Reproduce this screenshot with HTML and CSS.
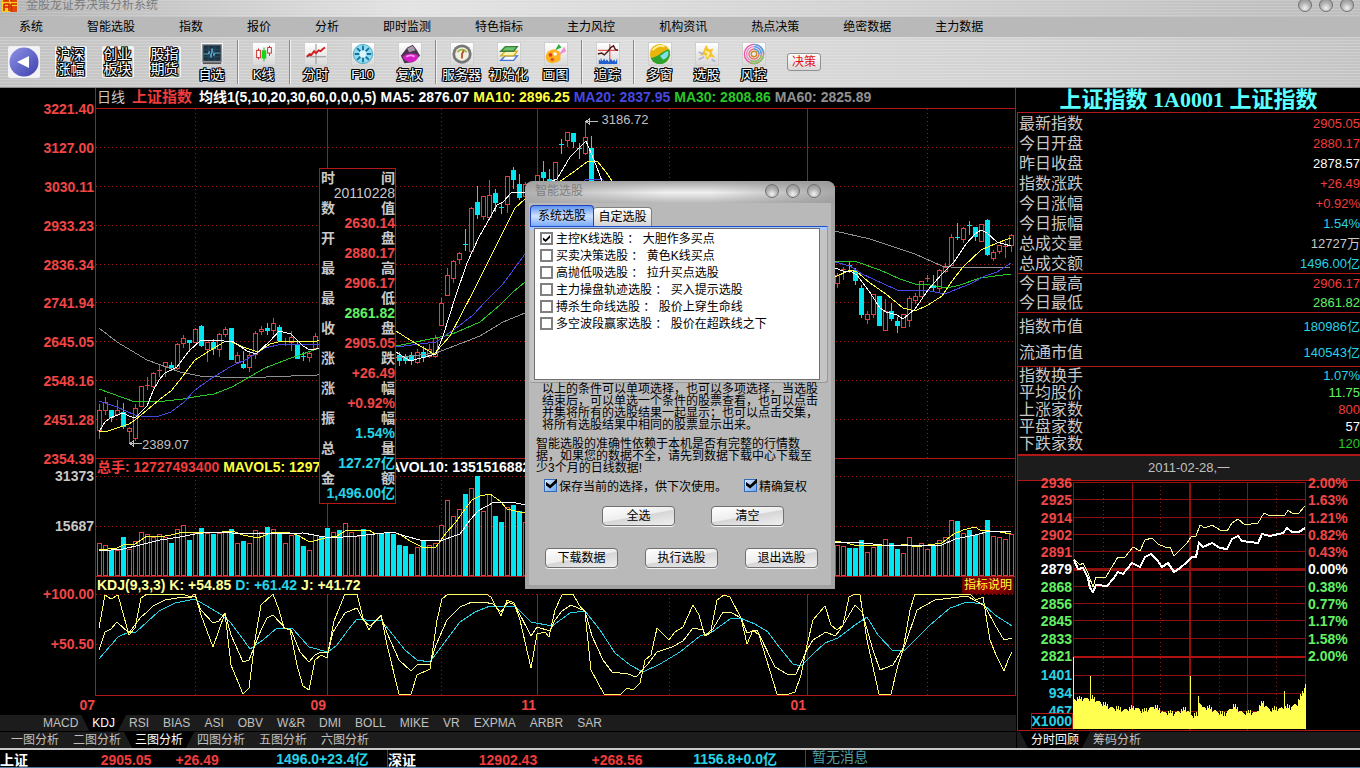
FILE: index.html
```html
<!DOCTYPE html>
<html lang="zh-CN">
<head>
    <meta charset="UTF-8">
    <meta name="viewport" content="width=device-width, initial-scale=1.0">
    <title>金股龙证券决策分析系统</title>
    <link rel="stylesheet" href="styles.css">
</head>
<body>
    <header class="titlebar">
        <svg class="app-logo" width="16" height="16" viewBox="0 0 16 16">
            <rect width="16" height="16" fill="#f6d21c"/>
            <path d="M1 2h6M1 5h6M2 8h5v7M2 8v7M2 11h5M4 0v5M9 2h6M9 2v3h6M9 8h6M9 8v7h6M9 11h6M9 13h6" stroke="#d81e06" stroke-width="1.6" fill="none"/>
        </svg>
        <span class="app-title">金股龙证券决策分析系统</span>
        <span class="win-buttons">
            <button class="orb" aria-label="最小化"></button>
            <button class="orb" aria-label="最大化"></button>
            <button class="orb" aria-label="关闭"></button>
        </span>
    </header>

    <nav class="menu">
        <a href="#">系统</a>
        <a href="#">智能选股</a>
        <a href="#">指数</a>
        <a href="#">报价</a>
        <a href="#">分析</a>
        <a href="#">即时监测</a>
        <a href="#">特色指标</a>
        <a href="#">主力风控</a>
        <a href="#">机构资讯</a>
        <a href="#">热点决策</a>
        <a href="#">绝密数据</a>
        <a href="#">主力数据</a>
    </nav>

    <div class="toolbar">
        <button class="tool" aria-label="返回">
            <svg width="32" height="32" viewBox="0 0 32 32">
                <defs>
                    <linearGradient id="back" x1="0" y1="0" x2="1" y2="1">
                        <stop offset="0" stop-color="#8f93e6"/>
                        <stop offset="1" stop-color="#3c40ae"/>
                    </linearGradient>
                </defs>
                <rect width="32" height="32" rx="2" fill="#f1f1f6"/>
                <circle cx="16" cy="16" r="14.5" fill="url(#back)"/>
                <path d="M9 16 21 10v12z" fill="#fff"/>
            </svg>
        </button>
        <button class="tool"><span class="tile">沪深<br>涨幅</span></button>
        <button class="tool"><span class="tile">创业<br>板块</span></button>
        <button class="tool"><span class="tile tile-green">股指<br>期货</span></button>
        <button class="tool">
            <svg class="icon" viewBox="0 0 24 24">
                <rect x="1" y="1" width="22" height="20" fill="#8f979c"/>
                <rect x="2.500" y="2.500" width="19" height="17" fill="#1d3344"/>
                <path d="M3 7h18M3 15h18M8 3v16M15 3v16" stroke="#2b4a60"/>
                <path d="M3 12h5l1-3 2 7 1-10 2 8 1-3h6" stroke="#5ab6dc" fill="none"/>
                <path d="M2 22h20" stroke="#555" stroke-width="2"/>
            </svg>
            <span class="caption">自选</span>
        </button>
        <i class="split"></i>
        <button class="tool">
            <svg class="icon" viewBox="0 0 24 24">
                <path d="M6 6v12M18 3v11" stroke="#c92020"/>
                <path d="M12 5v15" stroke="#15a815"/>
                <rect x="4" y="8" width="4" height="8" fill="#fff" stroke="#c92020"/>
                <rect x="9.500" y="8" width="5" height="9" fill="#19d319"/>
                <rect x="16" y="5" width="4" height="6" fill="#fff" stroke="#c92020"/>
            </svg>
            <span class="caption">K线</span>
        </button>
        <i class="split"></i>
        <button class="tool">
            <svg class="icon" viewBox="0 0 24 24">
                <path d="M12 1v22M1 15h22" stroke="#8b8b8b"/>
                <path d="M2 15l3-3 2 1 3-4 2 2 3-3 2 1 3-3 2-1" stroke="#d51c1c" stroke-width="2" fill="none"/>
            </svg>
            <span class="caption">分时</span>
        </button>
        <button class="tool">
            <svg class="icon" viewBox="0 0 24 24">
                <circle cx="12" cy="12" r="10.500" fill="#8edcf0" stroke="#4aa6c2"/>
                <path d="M12 3v18M3 12h18M5.500 5.500l13 13M18.500 5.500l-13 13" stroke="#186f9c" stroke-width="2"/>
                <circle cx="12" cy="12" r="4" fill="#d6f7ff"/>
            </svg>
            <span class="caption">F10</span>
        </button>
        <button class="tool">
            <svg class="icon" viewBox="0 0 24 24">
                <path d="M2 14 9 5l6-3 4 5 4 7-8 7-9 1z" fill="#4a3450"/>
                <path d="M9 6l6-3 3 5-7 2z" fill="#a99aa9"/>
                <path d="M4 15c3-4 14-5 17-1 0 5-5 7-8 7s-8-2-9-6z" fill="#d41ec3"/>
                <path d="M8 15c3-2 7-2 9 0" stroke="#ff9cf5" stroke-width="2" fill="none"/>
            </svg>
            <span class="caption">复权</span>
        </button>
        <i class="split"></i>
        <button class="tool">
            <svg class="icon" viewBox="0 0 24 24">
                <circle cx="12" cy="12" r="10.500" fill="#777"/>
                <circle cx="12" cy="12" r="7.500" fill="#f2efe0"/>
                <path d="M7 10a6 6 0 0 1 10 0" stroke="#9ab83c" stroke-width="2" fill="none"/>
                <path d="M12 17v-5l2-4" stroke="#b2542a" stroke-width="2" fill="none"/>
            </svg>
            <span class="caption">服务器</span>
        </button>
        <button class="tool">
            <svg class="icon" viewBox="0 0 24 24">
                <path d="M8 14h13l-4 5H3z" fill="#fff" stroke="#3a72d8" stroke-width="1.500"/>
                <path d="M8 9h13l-4 5H3z" fill="#fff3b0" stroke="#d6b018" stroke-width="1.500"/>
                <path d="M8 4h13l-4 5H3z" fill="#6bc46b" stroke="#3c7c3c" stroke-width="1.500"/>
            </svg>
            <span class="caption">初始化</span>
        </button>
        <button class="tool">
            <svg class="icon" viewBox="0 0 24 24">
                <path d="M1 14C2 8 10 5 15 9c4 3 1 6 2 8s-5 5-9 5-8-3-7-8z" fill="#ffb21e"/>
                <circle cx="6" cy="13" r="2" fill="#e43a1c"/>
                <circle cx="8" cy="18" r="2" fill="#e0502a"/>
                <circle cx="11" cy="12" r="2" fill="#fff"/>
                <path d="M11 8l4-7 3 4z" fill="#2eae3d"/>
                <path d="M15 13l6-9 2 5z" fill="#f08cc8"/>
            </svg>
            <span class="caption">画图</span>
        </button>
        <i class="split"></i>
        <button class="tool">
            <svg class="icon" viewBox="0 0 24 24">
                <path d="M1 8h22M14 1v20" stroke="#e02020"/>
                <path d="M1 12l4-1 3 2 4-4 3-4 3-2 2 4 3 1" stroke="#4b1515" stroke-width="1.500" fill="none"/>
                <path d="M2 23v-5l2 2v-4l2 4 2-3 1 3 2-2 2 3 2-4 2 3 2-2 1 3 2-4v6z" fill="#1f5fd0"/>
            </svg>
            <span class="caption">追踪</span>
        </button>
        <i class="split"></i>
        <button class="tool">
            <svg class="icon" viewBox="0 0 24 24">
                <circle cx="12" cy="12" r="11" fill="#e9b50a"/>
                <path d="M2 16C10 16 14 8 22 7c3 7-2 16-10 16-5 0-9-3-10-7z" fill="#2da22d"/>
                <path d="M12 14c3-1 5-5 9-5 1 5-2 9-6 9z" fill="#7fe0e8"/>
                <path d="M4 8c3-5 9-6 13-4" stroke="#fff2a0" stroke-width="2" fill="none"/>
            </svg>
            <span class="caption">多窗</span>
        </button>
        <button class="tool">
            <svg class="icon" viewBox="0 0 24 24">
                <path d="M11 2l3 5 5-1-2 5 4 5-6-1-3 4-2-6-6 1 4-5z" fill="#f4c52c"/>
                <path d="M3 18l6-3M17 18l4 2M3 10l5 2" stroke="#b0b0d8" stroke-width="2"/>
                <path d="M10 9l4 2-2 4" stroke="#fff2b0" stroke-width="2" fill="none"/>
            </svg>
            <span class="caption">选股</span>
        </button>
        <button class="tool">
            <svg class="icon" viewBox="0 0 24 24" fill="none">
                <circle cx="12" cy="12" r="10.500" stroke="#f0559f" stroke-width="1.500"/>
                <circle cx="12" cy="12" r="8" stroke="#e08ad8" stroke-width="1.500"/>
                <circle cx="12" cy="12" r="5.500" stroke="#ef6f6f" stroke-width="1.500"/>
                <circle cx="12" cy="12" r="3" stroke="#cc8a20" stroke-width="1.500"/>
                <path d="M12 1.500A10.500 10.500 0 0 1 22.500 12M12 4a8 8 0 0 1 8 8M12 6.500a5.500 5.500 0 0 1 5.500 5.500" stroke="#4aa6e8" stroke-width="1.500"/>
                <path d="M22.500 12A10.500 10.500 0 0 1 7 21M20 12a8 8 0 0 1-12 7" stroke="#7fc95a" stroke-width="1.500"/>
            </svg>
            <span class="caption">风控</span>
        </button>
        <button class="decide">决策</button>
    </div>

    <main class="workspace">
        <section class="charts">
            <div class="panel">
                <div class="axis axis-price">
                    <span>3221.40</span><span>3127.00</span><span>3030.11</span><span>2933.23</span><span>2836.34</span>
                    <span>2741.94</span><span>2645.05</span><span>2548.16</span><span>2451.28</span><span>2354.39</span>
                </div>
                <div class="plot">
                    <div class="legend legend-main">
                        <span class="silver">日线</span>
                        <span class="red wide">上证指数</span>
                        <span class="ma">
                            <span>均线1(5,10,20,30,60,0,0,0,5)</span>
                            <span>MA5: 2876.07</span>
                            <span class="yellow">MA10: 2896.25</span>
                            <span class="blue">MA20: 2837.95</span>
                            <span class="green">MA30: 2808.86</span>
                            <span class="gray">MA60: 2825.89</span>
                        </span>
                    </div>
                    <div class="canvas">
                        <svg id="price" class="price-svg" viewBox="96 109 919 349" preserveAspectRatio="none"></svg>
                        <span class="mark mark-high">3186.72</span>
                        <span class="mark mark-low">2389.07</span>
                    </div>
                </div>
            </div>
            <div class="panel">
                <div class="axis axis-sub silver">
                    <span>31373</span><span>15687</span>
                </div>
                <div class="plot">
                    <div class="legend">
                        <span class="red">总手: 12727493400</span>
                        <span class="yellow">MAVOL5: 12975320256</span>
                        <span>MAVOL10: 13515168829</span>
                    </div>
                    <svg id="volume" class="volume-svg" viewBox="96 476 919 100" preserveAspectRatio="none"></svg>
                </div>
            </div>
            <div class="panel">
                <div class="axis axis-sub">
                    <span>+100.00</span><span>+50.50</span>
                </div>
                <div class="plot">
                    <div class="legend">
                        <span class="pale">KDJ(9,3,3) K: +54.85</span>
                        <span class="cyan">D: +61.42</span>
                        <span class="pale">J: +41.72</span>
                        <a class="explain" href="#">指标说明</a>
                    </div>
                    <svg id="kdj" class="kdj-svg" viewBox="96 594 919 101" preserveAspectRatio="none"></svg>
                </div>
            </div>
            <div class="months">
                <span>07</span><span>09</span><span>11</span><span>01</span>
            </div>
            <div class="tabs tabs-indicator">
                <button>MACD</button>
                <button class="on">KDJ</button>
                <button>RSI</button>
                <button>BIAS</button>
                <button>ASI</button>
                <button>OBV</button>
                <button>W&amp;R</button>
                <button>DMI</button>
                <button>BOLL</button>
                <button>MIKE</button>
                <button>VR</button>
                <button>EXPMA</button>
                <button>ARBR</button>
                <button>SAR</button>
            </div>
            <div class="tabs tabs-view">
                <button>一图分析</button>
                <button>二图分析</button>
                <button class="on">三图分析</button>
                <button>四图分析</button>
                <button>五图分析</button>
                <button>六图分析</button>
            </div>
        </section>

        <aside class="quote">
            <h2>上证指数 1A0001 上证指数</h2>
            <div class="quote-box">
                <table class="rows">
                    <tr><th>最新指数</th><td class="red">2905.05</td></tr>
                    <tr><th>今日开盘</th><td class="red">2880.17</td></tr>
                    <tr><th>昨日收盘</th><td class="white">2878.57</td></tr>
                    <tr><th>指数涨跌</th><td class="red">+26.49</td></tr>
                    <tr><th>今日涨幅</th><td class="red">+0.92%</td></tr>
                    <tr><th>今日振幅</th><td class="cyan">1.54%</td></tr>
                    <tr><th>总成交量</th><td class="silver">12727万</td></tr>
                    <tr><th>总成交额</th><td class="cyan">1496.00亿</td></tr>
                </table>
                <table class="rows rows-range">
                    <tr><th>今日最高</th><td class="red">2906.17</td></tr>
                    <tr><th>今日最低</th><td class="lime">2861.82</td></tr>
                </table>
                <table class="rows rows-value">
                    <tr><th>指数市值</th><td class="cyan">180986亿</td></tr>
                    <tr><th>流通市值</th><td class="cyan">140543亿</td></tr>
                </table>
                <table class="rows rows-count">
                    <tr><th>指数换手</th><td class="cyan">1.07%</td></tr>
                    <tr><th>平均股价</th><td class="lime">11.75</td></tr>
                    <tr><th>上涨家数</th><td class="red">800</td></tr>
                    <tr><th>平盘家数</th><td class="white">57</td></tr>
                    <tr><th>下跌家数</th><td class="green">120</td></tr>
                </table>
                <div class="day">2011-02-28,一</div>
                <div class="mini">
                    <div class="mini-axis left">
                        <div class="scale">
                            <span>2936</span><span>2925</span><span>2914</span><span>2902</span><span>2891</span>
                            <span class="white">2879</span>
                            <span class="lime">2868</span><span class="lime">2856</span><span class="lime">2845</span><span class="lime">2833</span><span class="lime">2821</span>
                        </div>
                        <div class="lots cyan"><span>1401</span><span>934</span><span>467</span></div>
                        <b class="unit">X1000</b>
                    </div>
                    <svg id="trend" class="trend-svg" viewBox="1073 481 233 249" preserveAspectRatio="none"></svg>
                    <div class="mini-axis">
                        <div class="scale">
                            <span>2.00%</span><span>1.63%</span><span>1.21%</span><span>0.82%</span><span>0.43%</span>
                            <span class="white">0.00%</span>
                            <span class="lime">0.38%</span><span class="lime">0.77%</span><span class="lime">1.17%</span><span class="lime">1.58%</span><span class="lime">2.00%</span>
                        </div>
                    </div>
                </div>
            </div>
            <div class="tabs tabs-quote">
                <button class="on">分时回顾</button>
                <button>筹码分析</button>
            </div>
        </aside>

        <dl class="tip">
            <dt><span>时</span><span>间</span></dt><dd class="silver">20110228</dd>
            <dt><span>数</span><span>值</span></dt><dd>2630.14</dd>
            <dt><span>开</span><span>盘</span></dt><dd>2880.17</dd>
            <dt><span>最</span><span>高</span></dt><dd>2906.17</dd>
            <dt><span>最</span><span>低</span></dt><dd class="lime">2861.82</dd>
            <dt><span>收</span><span>盘</span></dt><dd>2905.05</dd>
            <dt><span>涨</span><span>跌</span></dt><dd>+26.49</dd>
            <dt><span>涨</span><span>幅</span></dt><dd>+0.92%</dd>
            <dt><span>振</span><span>幅</span></dt><dd class="cyan">1.54%</dd>
            <dt><span>总</span><span>量</span></dt><dd class="cyan">127.27亿</dd>
            <dt><span>金</span><span>额</span></dt><dd class="cyan">1,496.00亿</dd>
        </dl>

        <form class="dialog">
            <div class="dialog-title">
                <span>智能选股</span>
                <span class="win-buttons">
                    <button type="button" class="orb" aria-label="最小化"></button>
                    <button type="button" class="orb" aria-label="最大化"></button>
                    <button type="button" class="orb" aria-label="关闭"></button>
                </span>
            </div>
            <div class="dialog-tabs">
                <button type="button" class="on">系统选股</button>
                <button type="button">自定选股</button>
            </div>
            <div class="sheet">
                <div class="list">
                    <label><input type="checkbox" checked>主控K线选股 ： 大胆作多买点</label>
                    <label><input type="checkbox">买卖决策选股 ： 黄色K线买点</label>
                    <label><input type="checkbox">高抛低吸选股 ： 拉升买点选股</label>
                    <label><input type="checkbox">主力操盘轨迹选股 ： 买入提示选股</label>
                    <label><input type="checkbox">搏杀生命线选股 ： 股价上穿生命线</label>
                    <label><input type="checkbox">多空波段赢家选股 ： 股价在超跌线之下</label>
                </div>
            </div>
            <p class="note">以上的条件可以单项选择，也可以多项选择，当选股<br>结束后，可以单选一个条件的股票查看，也可以点击<br>并集将所有的选股结果一起显示；也可以点击交集，<br>将所有选股结果中相同的股票显示出来。</p>
            <p class="note note-wide">智能选股的准确性依赖于本机是否有完整的行情数<br>据，如果您的数据不全，请先到数据下载中心下载至<br>少3个月的日线数据!</p>
            <div class="options">
                <label><input type="checkbox" checked>保存当前的选择，供下次使用。</label>
                <label><input type="checkbox" checked>精确复权</label>
            </div>
            <div class="actions actions-pick">
                <button type="button">全选</button>
                <button type="button">清空</button>
            </div>
            <div class="actions">
                <button type="button">下载数据</button>
                <button type="button">执行选股</button>
                <button type="button">退出选股</button>
            </div>
        </form>
    </main>

    <footer class="status">
        <div class="market">
            <span class="name">上证</span><span class="red">2905.05</span><span class="red">+26.49</span><span class="cyan">1496.0+23.4亿</span>
        </div>
        <div class="market market-sz">
            <span class="name">深证</span><span class="red">12902.43</span><span class="red">+268.56</span><span class="cyan">1156.8+0.0亿</span>
        </div>
        <div class="news">暂无消息</div>
    </footer>

    <script src="script.js"></script>
</body>
</html>
```
FILE: styles.css
```css
* {
    box-sizing: border-box;
}
body {
    margin: 0;
    background: #000;
    color: #fff;
    font-family: "Liberation Sans", "Noto Sans CJK SC", sans-serif;
    font-size: 12px;
}
button {
    font: inherit;
    border: 0;
    padding: 0;
    background: none;
    color: inherit;
}
a {
    color: inherit;
    text-decoration: none;
}
svg {
    display: block;
}

.red { color: #f03c3c; }
.yellow { color: #ffff3c; }
.blue { color: #4848e0; }
.green { color: #28c828; }
.lime { color: #64f064; }
.gray { color: #909090; }
.silver { color: #c8c8c8; }
.cyan { color: #28d2e6; }
.pale { color: #ffff96; }
.white { color: #fff; }

/* window frame */
.titlebar {
    display: flex;
    height: 17px;
    padding: 0 6px 0 2px;
    gap: 8px;
    overflow: hidden;
    background: repeating-linear-gradient(rgba(255,255,255,0.15) 0 1px, transparent 1px 3px), linear-gradient(90deg, #b4b4b4, #e2e2e2 30%, #d4d4d4 60%, #bdbdbd);
}
.app-logo {
    margin-top: -4px;
}
.app-title {
    flex: 1;
    color: #7c7c7c;
    line-height: 10px;
}
.win-buttons {
    display: flex;
    gap: 7px;
}
.titlebar .orb {
    margin-top: -2px;
}
.orb {
    width: 14px;
    height: 14px;
    border-radius: 50%;
    border: 1px solid #707070;
    background: radial-gradient(circle at 50% 75%, #f2f2f2, #b0b0b0 50%, #8a8a8a);
}
.menu {
    display: flex;
    gap: 44px;
    padding: 0 19px;
    background: #b9b9b9;
    color: #000;
    line-height: 20px;
    white-space: nowrap;
}
.toolbar {
    display: flex;
    align-items: center;
    height: 51px;
    border-bottom: 1px solid #8c8c8c;
    background: repeating-linear-gradient(rgba(255,255,255,0.2) 0 1px, transparent 1px 3px), linear-gradient(90deg, #c2c2c2, #dcdcdc 45%, #d2d2d2 75%, #c4c4c4);
}
.tool {
    display: flex;
    flex-direction: column;
    align-items: center;
    flex: 0 0 47px;
    white-space: nowrap;
}
.icon {
    width: 24px;
    height: 24px;
    border: 1px solid #cfcfcf;
    background: linear-gradient(#fff, #d8d8d8);
}
.tile,
.caption {
    color: #fff;
    text-shadow: 1px 0 #000, -1px 0 #000, 0 1px #000, 0 -1px #000, 1px 1px #000, -1px -1px #000, 1px -1px #000, -1px 1px #000;
}
.tile {
    width: 32px;
    height: 32px;
    border: 1px solid #f4f4f4;
    border-radius: 2px;
    background: linear-gradient(#f4f4f4, #b8b8b8);
    font-size: 14px;
    line-height: 15px;
}
.tile-green {
    background: linear-gradient(#eef0e0, #b4be94);
}
.caption {
    font-size: 13px;
    line-height: 17px;
}
.split {
    flex: 0 0 5px;
    height: 44px;
    background: linear-gradient(90deg, transparent 2px, #8a8a8a 2px 3px, #f0f0f0 3px 4px, transparent 4px);
}
.decide {
    width: 34px;
    height: 18px;
    margin-left: 10px;
    border: 1px solid #909090;
    border-radius: 3px;
    background: linear-gradient(#fff, #d8d8d8);
    color: #e01010;
    line-height: 14px;
}

/* chart area */
.workspace {
    position: relative;
    display: flex;
}
.charts {
    flex: 1;
    min-width: 0;
}
.panel {
    display: grid;
    grid-template-columns: 95px minmax(0, 1fr);
}
.axis {
    display: flex;
    flex-direction: column;
    align-items: flex-end;
    padding-right: 1px;
    color: #f04646;
    font-weight: bold;
    font-size: 14px;
    line-height: 16px;
}
.axis-price {
    justify-content: space-between;
    margin: 13px 0 -8px;
}
.axis-sub {
    padding-top: 9px;
    gap: 34px;
}
.axis-sub.silver {
    color: #c8c8c8;
}
.plot {
    border: solid #b01818;
    border-width: 0 1px 1px;
}
.legend {
    display: flex;
    gap: 4px;
    padding-left: 1px;
    height: 17px;
    line-height: 17px;
    overflow: hidden;
    font-size: 14px;
    font-weight: bold;
    white-space: nowrap;
}
.legend-main {
    height: 21px;
    gap: 7px;
    line-height: 18px;
    border-bottom: 1px solid #b01818;
}
.legend-main .silver {
    font-weight: normal;
}
.wide {
    font-size: 15px;
}
.ma {
    display: flex;
    gap: 4px;
}
.explain {
    margin-left: auto;
    margin-right: 1px;
    padding: 0 2px;
    background: radial-gradient(#c80000, #500000);
    color: #ffff3c;
    font-size: 12px;
    font-weight: normal;
}
.canvas {
    position: relative;
}
.canvas svg,
.plot > svg,
.trend-svg {
    width: 100%;
    shape-rendering: crispEdges;
}
.price-svg { height: 349px; }
.volume-svg { height: 100px; }
.kdj-svg { height: 101px; }
.mark {
    position: absolute;
    color: #c0c0c0;
    font-size: 13px;
    line-height: 16px;
}
.mark-high {
    left: 55%;
    top: 1%;
}
.mark-low {
    left: 5%;
    top: 94%;
}
.months {
    display: grid;
    grid-template-columns: 95px 231fr 210fr 270fr;
    height: 19px;
    padding-right: 210px;
    color: #f04646;
    font-size: 14px;
    font-weight: bold;
    line-height: 18px;
    text-align: right;
}

/* black-on-gray tabs */
.tabs {
    display: flex;
    gap: 14px;
    height: 16px;
    background: #1c1c1c;
    color: #c0c0c0;
    line-height: 16px;
    white-space: nowrap;
}
.tabs button {
    position: relative;
    z-index: 0;
}
.tabs .on {
    color: #fff;
}
.tabs .on::before {
    content: '';
    position: absolute;
    z-index: -1;
    inset: 0 -11px;
    background: #000;
    clip-path: polygon(0 0, 100% 0, calc(100% - 8px) 100%, 8px 100%);
}
.tabs-indicator {
    padding-left: 43px;
}
.tabs-view {
    height: 17px;
    padding-left: 11px;
    border-top: 1px solid #000;
}
.tabs-quote {
    height: 17px;
    padding-left: 14px;
    border-top: 1px solid #000;
}

/* quote column */
.quote {
    flex: 0 0 344px;
    padding-left: 1px;
}
.quote h2 {
    margin: 0;
    height: 24px;
    color: #5affff;
    font: bold 22px/23px "Liberation Serif", "Noto Sans CJK SC", serif;
    text-align: center;
    white-space: nowrap;
}
.quote-box {
    border-left: 1px solid #b01818;
    border-bottom: 1px solid #b01818;
}
.rows {
    width: 100%;
    border-collapse: separate;
    border-spacing: 0;
    border-top: 1px solid #b01818;
}
.rows th,
.rows td {
    height: 20px;
    padding: 0 0 0 1px;
    font-weight: normal;
    line-height: 17px;
}
.rows th {
    color: #c8c8c8;
    font-size: 16px;
    text-align: left;
}
.rows td {
    font-size: 13px;
    text-align: right;
}
.rows-range th,
.rows-range td {
    height: 19px;
}
.rows-value {
    padding-bottom: 1px;
}
.rows-value th,
.rows-value td {
    height: 26px;
}
.rows-count {
    padding-bottom: 2px;
}
.rows-count th,
.rows-count td {
    height: 17px;
}
.day {
    height: 27px;
    border-top: 2px solid #b01818;
    border-bottom: 1px solid #b01818;
    background: #1c1c1c;
    color: #c0c0c0;
    font-size: 13px;
    line-height: 24px;
    text-align: center;
}
.mini {
    display: grid;
    grid-template-columns: 55px minmax(0, 1fr) 54px;
}
.trend-svg {
    height: 249px;
}
.mini-axis {
    position: relative;
    padding-left: 2px;
    color: #f04646;
    font-size: 14px;
    font-weight: bold;
    line-height: 16px;
}
.mini-axis.left {
    padding: 0 1px 0 0;
    text-align: right;
}
.scale {
    display: flex;
    flex-direction: column;
    justify-content: space-between;
    height: 189px;
    margin-top: -6px;
}
.lots {
    display: flex;
    flex-direction: column;
    padding-top: 2px;
    line-height: 18px;
}
.unit {
    position: absolute;
    right: 0;
    bottom: 1px;
    border: 1px solid #b01818;
    background: #000;
    color: #28d2e6;
    line-height: 14px;
}

/* crosshair data box */
.tip {
    position: absolute;
    left: 319px;
    top: 80px;
    width: 77px;
    margin: 0;
    padding: 2px 0;
    border: 1px solid #b01818;
    background: #000;
    color: #f04646;
    font-size: 14px;
    font-weight: bold;
    line-height: 15px;
    white-space: nowrap;
}
.tip dt {
    display: flex;
    justify-content: space-between;
    padding-left: 1px;
    color: #c8c8c8;
}
.tip dd {
    margin: 0;
    text-align: right;
}
.tip .silver {
    font-weight: normal;
}

/* stock picker */
.dialog {
    position: absolute;
    left: 525px;
    top: 93px;
    width: 310px;
    padding: 0 6px 17px 5px;
    border: solid #a2a2a2;
    border-width: 1px 0 4px;
    border-radius: 8px 8px 0 0;
    background: #b9b9b9;
    box-shadow: inset 4px 0 #a4a4a4, inset -4px 0 #a4a4a4;
    color: #000;
    white-space: nowrap;
}
.dialog-title {
    display: flex;
    justify-content: space-between;
    margin: 0 -6px 2px -5px;
    padding: 2px 14px 0 10px;
    height: 21px;
    border-radius: 8px 8px 0 0;
    background: linear-gradient(90deg, rgba(160,160,160,0.8), transparent 45%, transparent 60%, rgba(150,150,150,0.8)), linear-gradient(#a8a8a8, #f0f0f0 50%, #b9b9b9);
    color: #808080;
    line-height: 14px;
}
.dialog-tabs {
    display: flex;
    align-items: flex-end;
    height: 21px;
}
.dialog-tabs button {
    width: 58px;
    height: 19px;
    border: 1px solid #808080;
    border-width: 1px 1px 0 0;
    border-radius: 3px 4px 0 0;
    background: linear-gradient(#fff, #d4d4d4);
    line-height: 17px;
}
.dialog-tabs .on {
    width: 64px;
    height: 21px;
    border: 1px solid #2040c0;
    border-bottom: 0;
    border-radius: 4px 4px 0 0;
    background: linear-gradient(#5c92f0, #cfe2ff 50%, #78aaf8);
    line-height: 21px;
}
.sheet {
    padding: 1px 7px 2px 4px;
    margin-right: 1px;
    border: solid #989898;
    border-width: 1px 1px 1px 0;
    border-top-color: #2050c8;
    border-radius: 0 0 3px 3px;
    background: #c4c4c4;
    box-shadow: inset 0 3px #a8c8ff;
}
.list {
    display: flex;
    flex-direction: column;
    height: 152px;
    padding: 1px 0 0 5px;
    border: 1px solid #707070;
    background: #fff;
}
.list label {
    display: flex;
    align-items: center;
    gap: 3px;
    height: 17px;
    line-height: 16px;
    white-space: pre;
}
.dialog input {
    appearance: none;
    position: relative;
    width: 13px;
    height: 13px;
    margin: 0;
    border: 2px solid #808080;
    background: #fff;
}
.dialog input:checked::after {
    content: '';
    position: absolute;
    inset: 1px;
    background: #000;
    clip-path: polygon(0 35%, 38% 65%, 100% 0, 100% 40%, 38% 100%, 0 70%);
}
.dialog .options input {
    border: 1px solid #3468b8;
    background: linear-gradient(135deg, #dcebff, #68a4f0);
}
.dialog .options input:checked::after {
    inset: -1px -1px 2px 1px;
}
.note {
    margin: 0 0 7px 12px;
    line-height: 12px;
}
.note-wide {
    margin: 0 0 3px 6px;
}
.options {
    display: flex;
    gap: 17px;
    padding: 0 0 13px 14px;
}
.options label {
    display: flex;
    align-items: center;
    gap: 2px;
    height: 16px;
}
.actions {
    display: flex;
    gap: 27px;
    padding-left: 15px;
}
.actions-pick {
    gap: 36px;
    padding: 0 0 22px 72px;
}
.actions button {
    width: 73px;
    height: 20px;
    border: 1px solid #707070;
    border-radius: 4px;
    background: linear-gradient(170deg, #fff, #eee 48%, #d6d6d6 52%, #f0f0f0);
    box-shadow: 0 1px #f4f4f4;
    line-height: 17px;
}

/* market status */
.status {
    display: grid;
    grid-template-columns: 388fr 418fr 554fr;
    border-top: 2px solid #c8c8c8;
    border-bottom: 1px solid #5078a0;
    font-size: 14px;
    font-weight: bold;
    height: 20px;
    white-space: nowrap;
}
.market {
    display: grid;
    grid-template-columns: 101fr 75fr 101fr 111fr;
    height: 17px;
    border-right: 1px solid #b01818;
}
.market-sz {
    grid-template-columns: 91fr 113fr 102fr 112fr;
}
.market span {
    line-height: 21px;
}
.market .cyan {
    line-height: 18px;
}
.news {
    padding-left: 6px;
    color: #50a0a8;
    font-weight: normal;
    line-height: 15px;
}
```
FILE: script.js
```js
// [slot, up, high, body top, body bottom, low, volume top]
const bars = [
    [0,1,404,410,430,439,543],[1,1,397,402,410,415,545],[2,0,410,410,418,422,550],[3,1,400,410,414,415,550],
    [4,0,403,412,427,429,537],[5,1,427,428,431,443,549],[6,1,404,408,438,441,541],[7,1,386,386,406,406,532],
    [8,1,377,385,385,390,534],[9,1,372,373,386,388,537],[10,1,365,370,370,377,534],[11,1,362,362,366,377,537],
    [12,0,362,365,368,371,543],[13,1,343,344,368,370,529],[14,1,335,338,343,348,525],[15,0,340,340,343,352,540],
    [16,1,328,329,342,343,533],[17,0,325,326,346,347,528],[18,1,342,342,349,362,533],[19,0,339,342,349,355,534],
    [20,1,333,334,349,357,533],[21,1,327,329,334,337,532],[22,0,328,328,360,360,529],[23,1,352,355,362,362,543],
    [24,0,351,364,368,369,541],[25,1,351,355,367,372,543],[26,1,331,333,354,359,530],[27,1,326,329,331,335,532],
    [28,0,323,328,331,335,527],[29,1,318,323,330,335,529],[30,0,325,327,341,342,532],[31,1,338,341,341,346,543],
    [32,1,331,337,342,351,535],[33,0,342,344,359,359,535],[34,0,352,356,356,361,546],[35,1,352,353,357,362,550],
    [36,1,333,336,348,348,535],[37,0,340,342,350,352,537],[38,0,344,346,356,358,528],[39,1,340,344,354,356,532],
    [40,0,340,342,352,354,530],[41,1,336,340,350,352,523],[42,1,334,338,346,350,532],[43,1,332,336,344,348,536],
    [44,0,334,338,348,350,529],[45,1,336,340,348,352,534],[46,1,338,342,350,354,533],[47,0,340,346,352,356,533],
    [48,0,344,348,358,360,533],[49,0,346,350,360,364,534],[50,0,352,355,361,366,545],[51,0,354,357,361,364,546],
    [52,0,352,355,361,365,554],[53,1,349,352,362,364,547],[54,0,346,352,358,362,540],[55,1,344,349,356,358,545],
    [56,1,335,338,356,358,543],[57,1,298,303,325,325,525],[58,1,268,275,295,295,500],[59,1,260,261,278,283,516],
    [60,1,252,253,259,264,509],[61,0,229,244,245,251,494],[62,1,207,208,251,252,488],[63,0,186,202,215,219,476],
    [64,1,196,196,216,220,511],[65,1,180,195,217,219,494],[66,0,189,193,203,212,516],[67,0,203,207,207,214,522],
    [68,1,176,176,204,213,507],[69,0,167,170,180,189,505],[70,0,174,184,198,200,511],[71,1,182,184,196,200,522],
    [73,1,175,175,190,192,530],[74,0,161,172,178,187,530],[75,0,169,179,185,190,530],[76,1,162,162,185,185,530],
    [77,0,139,144,144,154,530],[78,1,132,132,140,147,530],[79,0,133,133,142,148,530],[80,0,143,148,149,159,530],
    [81,1,121,137,153,155,530],[82,0,136,148,182,190,530],
    [123,1,273,275,283,288,545],[124,1,267,269,270,280,546],[125,0,262,265,266,273,548],[126,0,268,270,281,285,548],
    [127,0,285,288,315,318,540],[128,1,311,314,319,324,552],[129,1,294,294,314,318,547],[130,0,296,296,326,326,544],
    [131,1,299,311,330,330,539],[132,0,303,311,319,321,543],[133,0,317,321,326,333,549],[134,1,314,314,327,327,553],
    [135,1,296,298,320,327,537],[136,1,293,296,300,304,545],[137,1,281,281,296,296,543],[138,1,275,278,278,282,549],
    [139,0,275,286,288,291,545],[140,1,269,270,288,293,540],[141,1,263,267,271,273,537],[142,1,234,237,265,266,520],
    [143,0,223,237,238,240,521],[144,1,227,228,239,243,533],[145,0,221,225,225,235,530],[146,0,227,227,237,241,535],
    [147,1,224,224,241,242,533],[148,0,219,220,255,256,520],[149,1,250,252,258,261,536],[150,1,245,245,251,254,537],
    [151,1,241,246,247,258,539],[152,1,234,235,245,252,534]
];

const priceLines = [
    ['#909090', '99,328 117,342 147,360 180,372 200,376 240,378 317,375 396,358 436,353 480,336 503,322 525,313 600,260 780,222 835,231 870,239 915,254 942,266 960,268 1011,267'],
    ['#28c828', '99,389 135,402 165,401 183,399 200,396 214,394 232,387 265,368 291,358 317,349 396,346 450,335 480,322 500,305 513,292 525,282 600,220 780,260 835,261 857,262 880,270 900,279 915,284 930,285 947,288 960,285 980,278 1011,274'],
    ['#4848e0', '99,401 117,407 135,415 147,417 159,416 171,412 183,403 195,390 212,378 230,367 247,359 265,348 282,344 317,344 396,347 436,342 455,329 473,315 486,301 503,284 525,254 586,179 602,179 640,220 780,250 835,262 850,266 862,274 897,290 930,291 945,294 957,289 970,284 985,276 997,272 1011,263'],
    ['#ffff3c', '99,431 105,432 117,428 129,424 135,420 147,410 159,400 171,391 183,376 195,360 206,353 224,342 230,341 243,347 258,352 270,344 282,341 317,341 360,325 396,331 410,340 434,354 450,336 473,292 486,266 503,232 515,208 525,199 562,180 575,171 588,161 597,161 606,172 612,181 640,240 800,290 835,277 850,270 857,272 870,283 886,294 903,308 915,311 928,305 942,296 952,281 963,267 981,250 997,243 1011,238'],
    ['#ffffff', '99,432 105,422 110,418 123,413 129,416 135,418 147,406 153,391 159,380 165,373 171,370 177,367 189,351 200,341 212,340 224,341 232,341 247,351 256,354 270,341 279,331 291,334 303,346 310,350 316,349 360,340 396,352 410,361 436,354 443,336 455,298 467,263 479,237 491,216 497,205 503,202 511,193 525,192 557,179 570,157 586,141 594,160 602,181 640,260 800,290 835,268 843,271 850,271 857,275 869,291 880,308 886,312 897,315 903,319 915,309 928,290 942,274 954,262 966,244 975,234 981,230 987,233 997,242 1011,246']
];
const volumeLines = [
    ['#ffff3c', '99,550 117,548 123,545 135,544 147,536 159,537 171,535 183,532 200,532 222,532 232,531 243,535 258,538 271,533 287,532 297,535 310,542 325,538 337,536 345,531 357,530 369,530 375,534 393,532 401,535 410,541 422,547 436,547 446,533 456,522 465,509 472,500 480,496 490,494 500,501 507,509 515,511 525,513 835,541 847,543 857,546 880,545 897,546 905,544 915,547 942,543 954,534 963,530 975,527 980,530 1000,532 1011,534'],
    ['#ffffff', '99,551 123,549 140,545 160,540 180,537 195,534 212,532 224,532 240,534 303,533 330,538 357,536 393,532 405,536 420,540 440,541 460,534 470,520 478,511 494,502 512,502 525,505 835,542 863,543 882,545 925,546 942,545 955,539 975,535 990,531 1011,531']
];
const kdjLines = [
    ['#28d2e6', '99,659 111,645 118,637 129,632 136,632 147,622 159,611 175,603 195,599 205,605 222,615 230,622 240,635 250,649 263,640 277,628 293,629 309,647 328,652 337,645 348,630 357,619 366,620 381,620 393,635 405,650 417,660 430,662 445,642 460,622 475,612 490,606 505,607 515,606 531,622 552,626 570,613 585,611 600,630 615,653 630,665 643,672 660,664 680,652 700,636 712,632 730,619 740,618 755,624 768,632 780,648 793,664 801,666 813,654 825,643 838,638 855,625 867,617 878,635 893,651 905,650 915,640 930,625 950,608 967,602 983,604 995,615 1012,626'],
    ['#ffff96', '99,650 105,632 111,629 117,622 129,633 141,617 147,612 153,606 165,600 183,597 192,597 195,596 201,610 213,623 219,621 225,613 231,635 243,662 249,660 255,645 261,630 267,618 273,615 285,628 291,630 300,652 309,662 315,655 321,652 328,653 333,632 345,613 357,608 363,620 370,626 381,616 387,633 399,660 411,671 417,665 430,664 436,645 447,620 460,607 472,602 484,602 493,604 501,612 508,602 515,605 531,636 537,627 550,631 555,620 562,611 571,605 585,611 592,636 603,660 612,672 628,674 636,677 648,664 657,652 672,647 683,641 693,628 703,630 706,636 711,632 723,612 732,613 741,618 747,633 757,630 775,667 787,674 796,674 807,650 813,640 826,632 835,636 840,630 855,605 862,612 873,650 880,670 893,665 905,645 917,610 935,600 967,596 985,606 995,625 1004,640 1012,638'],
    ['#ffff64', '99,628 105,595 111,599 118,595 129,635 135,628 141,598 147,594 183,594 190,597 195,594 201,615 213,647 225,613 231,665 243,694 249,688 255,640 261,605 273,594 279,610 284,628 290,630 297,665 303,686 309,690 315,660 321,655 327,658 334,621 345,594 357,594 363,618 369,630 374,622 381,615 387,645 399,694 411,694 417,675 430,669 437,620 442,599 448,594 486,594 491,597 501,616 507,600 514,603 520,620 531,668 537,634 545,632 549,637 555,610 562,595 573,594 579,605 585,612 591,670 604,694 621,694 627,688 633,690 640,683 645,660 651,655 657,628 669,640 675,632 683,627 693,605 699,615 705,636 711,630 717,600 724,595 730,597 741,618 747,644 753,630 759,635 777,694 789,694 795,692 801,675 807,645 813,620 825,606 831,625 837,630 843,625 849,597 855,594 860,595 867,640 879,694 891,694 898,665 903,650 910,610 915,594 970,594 976,600 983,597 990,640 996,655 1004,671 1008,660 1012,652']
];

const RED = '#e04040';
const CYAN = '#00e6f0';

const line = (x1, y1, x2, y2, color, extra = '') =>
    `<line x1="${x1}" y1="${y1}" x2="${x2}" y2="${y2}" stroke="${color}" ${extra}/>`;
const poly = (points, color, width = 1) =>
    `<polyline points="${points}" fill="none" stroke="${color}" stroke-width="${width}"/>`;
const dots = 'stroke-dasharray="1 3"';

function grid(top, bottom, rows) {
    let out = '';
    rows.forEach(y => out += line(96, y + 0.5, 1015, y + 0.5, '#a01818', dots));
    [195, 441, 669, 927].forEach(x => out += line(x + 0.5, top, x + 0.5, bottom, '#a01818', dots));
    [327, 537, 807].forEach(x => out += line(x + 0.5, top, x + 0.5, bottom, '#a01818'));
    return out;
}

function drawPrice() {
    let out = grid(109, 458, [147, 186, 225, 264, 302, 341, 380, 419]);
    bars.forEach(([i, up, high, top, bottom, low]) => {
        const x = 99 + i * 6;
        const color = up ? RED : CYAN;
        if (bottom - top < 2) {
            out += line(x + 0.5, high, x + 0.5, low, color);
            out += line(x - 2, top + 0.5, x + 3, top + 0.5, color);
        } else if (up) {
            out += line(x + 0.5, high, x + 0.5, top, color) + line(x + 0.5, bottom, x + 0.5, low, color);
            out += `<rect x="${x - 1.5}" y="${top + 0.5}" width="4" height="${bottom - top}" fill="#000" stroke="${color}"/>`;
        } else {
            out += line(x + 0.5, high, x + 0.5, low, color);
            out += `<rect x="${x - 2}" y="${top}" width="5" height="${bottom - top}" fill="${color}"/>`;
        }
    });
    priceLines.forEach(([color, points]) => out += poly(points, color));
    // pointers to the highest and lowest price
    out += poly('598,121.5 586,121.5 589,119 589,124 586,121.5', '#c0c0c0');
    out += poly('142,443.500 130,443.500 133,441 133,446 130,443.500', '#c0c0c0');
    document.getElementById('price').innerHTML = out;
}

function drawVolume() {
    let out = grid(476, 576, [476, 526]);
    bars.forEach(bar => {
        const x = 99 + bar[0] * 6;
        const top = bar[6];
        out += bar[1]
            ? `<rect x="${x - 1.5}" y="${top + 0.5}" width="4" height="${575 - top}" fill="#000" stroke="${RED}"/>`
            : `<rect x="${x - 2}" y="${top}" width="5" height="${576 - top}" fill="${CYAN}"/>`;
    });
    volumeLines.forEach(([color, points]) => out += poly(points, color));
    document.getElementById('volume').innerHTML = out;
}

function drawKdj() {
    let out = grid(594, 695, [594, 644]);
    kdjLines.forEach(([color, points]) => out += poly(points, color));
    document.getElementById('kdj').innerHTML = out;
}

function drawTrend() {
    let out = '';
    [482, 499, 517, 534, 551, 586, 603, 620, 638, 675, 693, 711].forEach(y => out += line(1073, y + 0.5, 1306, y + 0.5, '#901010'));
    [1103, 1160, 1219, 1276].forEach(x => out += line(x + 0.5, 482, x + 0.5, 730, '#981818', dots));
    [1073, 1132, 1247, 1305].forEach(x => out += line(x + 0.5, 482, x + 0.5, 730, '#901010'));
    out += line(1190, 482, 1190, 730, '#901010', 'stroke-width="2"');
    out += line(1073, 569.5, 1306, 569.5, '#901010', 'stroke-width="3"');
    out += line(1073, 657, 1306, 657, '#b01010', 'stroke-width="2"');

    const shape = [[1073,699],[1092,698],[1107,706],[1123,710],[1135,707],[1143,711],[1153,706],[1163,712],[1173,713],[1186,709],[1191,715],[1197,715],[1198,698],[1202,707],[1210,708],[1223,715],[1233,706],[1243,713],[1256,712],[1262,702],[1270,710],[1280,708],[1290,707],[1297,703],[1302,693],[1306,681]];
    const spikes = { 1073: 657, 1090: 676, 1190: 676, 1284: 691 };
    for (let x = 1073; x < 1306; x++) {
        const n = shape.findIndex(p => p[0] > x);
        const [x0, y0] = shape[n - 1];
        const [x1, y1] = shape[n];
        const base = y0 + (y1 - y0) * (x - x0) / (x1 - x0);
        const y = spikes[x] || Math.round(base + (x * x * 7 % 13) / 2 - 3);
        out += `<rect x="${x}" y="${y}" width="1" height="${729 - y}" fill="#ffff50"/>`;
    }
    out += poly('1074,559 1080,565 1083,563 1088,573 1093,587 1096,577 1102,577 1106,577 1110,570 1118,557 1125,557 1133,547 1140,551 1145,540 1152,538 1158,544 1165,547 1170,547 1174,556 1180,550 1187,543 1191,537 1196,536 1200,525 1205,528 1212,525 1220,530 1227,531 1232,523 1238,519 1245,525 1258,523 1264,513 1270,516 1285,515 1288,510 1293,514 1299,513 1305,506', '#ffff96');
    out += poly('1074,560 1078,569 1083,568 1088,578 1090,588 1093,592 1096,585 1107,586 1113,579 1118,572 1123,574 1132,563 1140,567 1145,557 1151,554 1157,560 1162,567 1168,563 1174,572 1180,568 1187,562 1192,557 1196,557 1199,543 1203,547 1212,543 1220,548 1227,549 1232,539 1238,536 1242,541 1258,543 1262,534 1270,536 1283,533 1287,528 1292,532 1299,532 1305,528', '#fff', 2);
    document.getElementById('trend').innerHTML = out;
}

drawPrice();
drawVolume();
drawKdj();
drawTrend();
```
